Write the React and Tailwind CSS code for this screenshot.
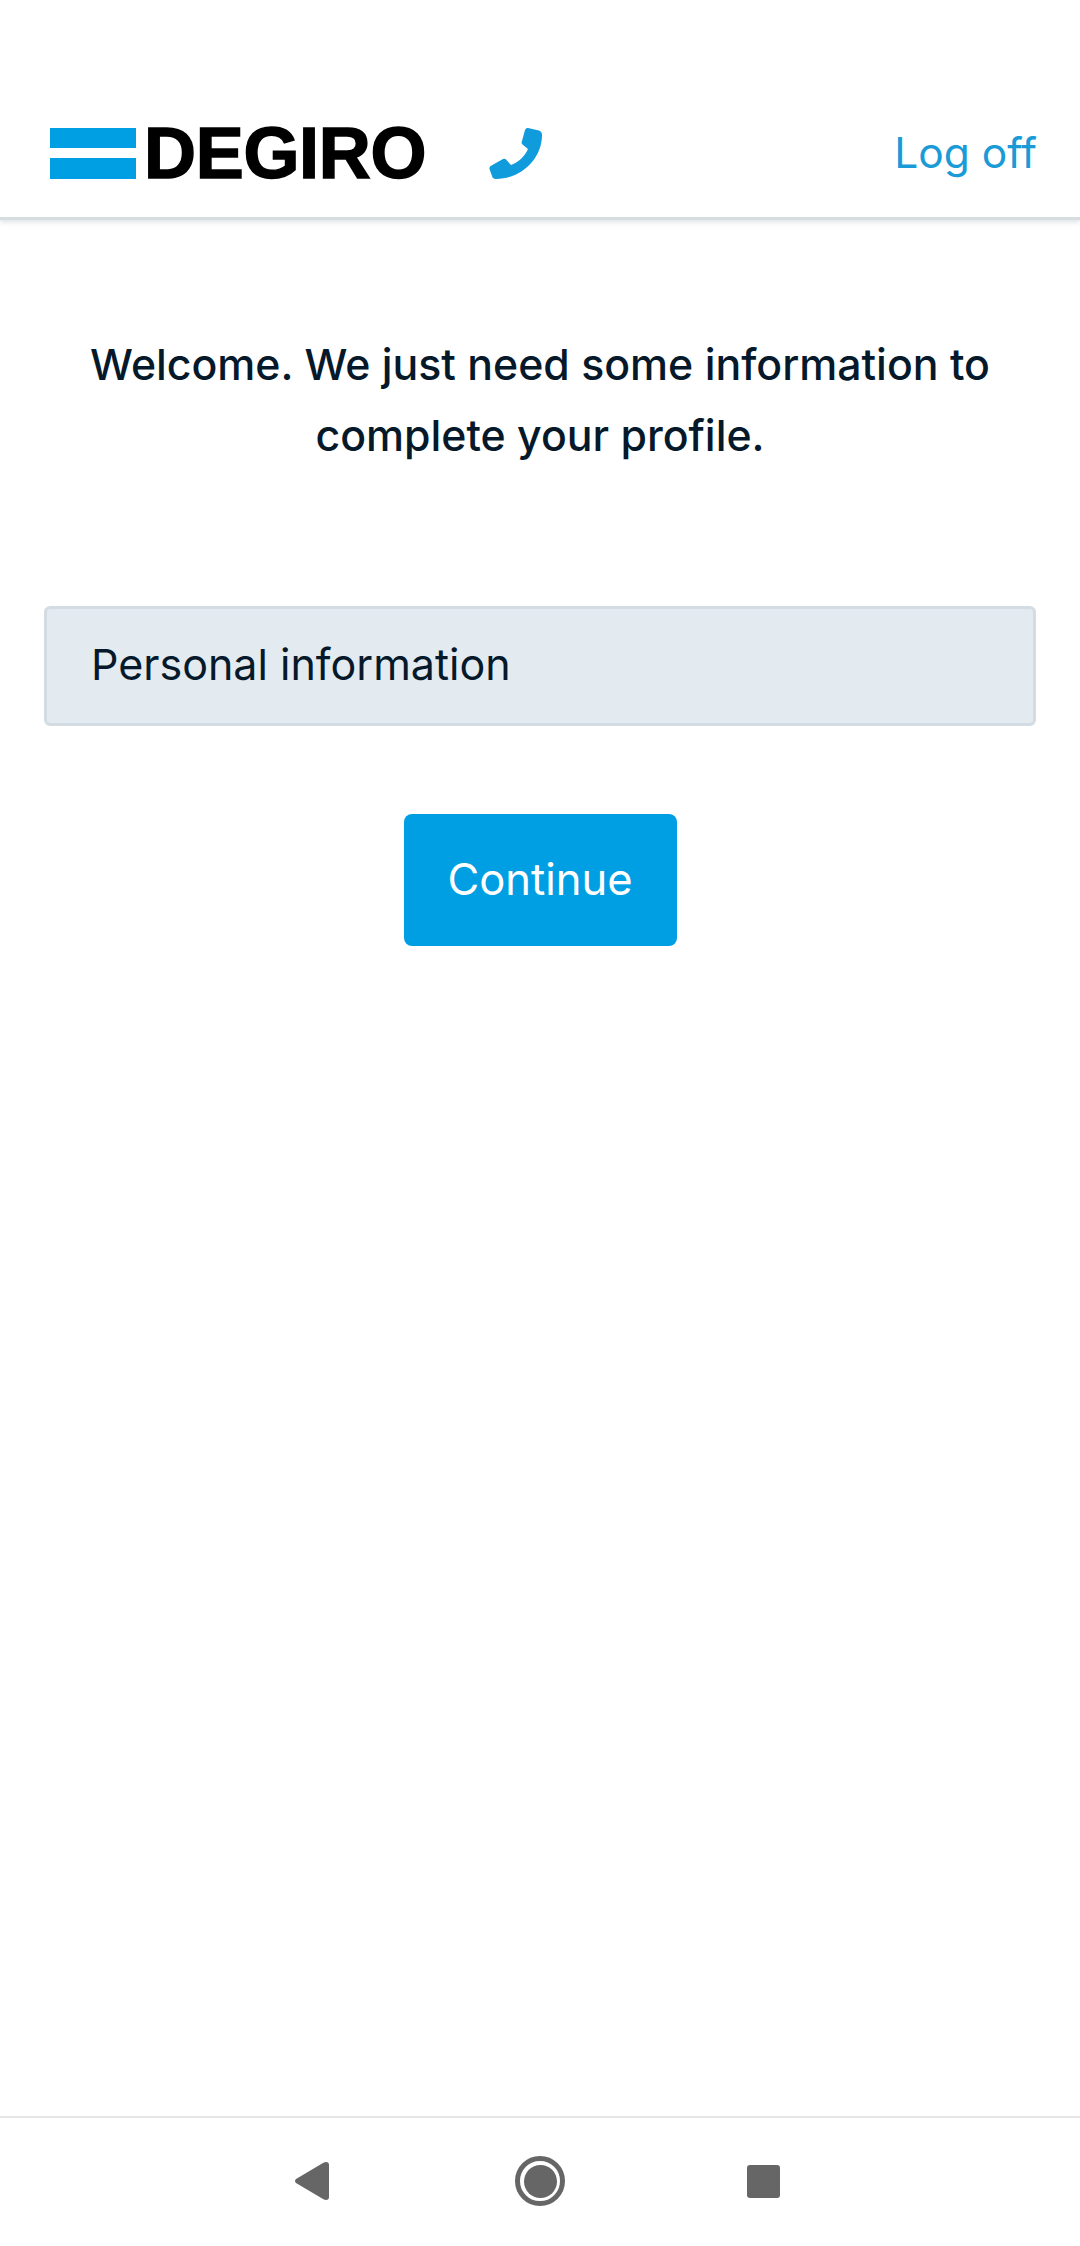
export default function App() {
  return (
    <div className="flex h-[2246px] w-[1080px] flex-col overflow-hidden bg-white font-['Inter',sans-serif] text-[#06192a]">
      <header className="flex h-[220px] shrink-0 items-end justify-between border-b-[3px] border-[#d5dde1] pb-[38px] pl-[50px] pr-[43px] shadow-[0_3px_4px_rgba(150,165,175,0.25)]">
        <div className="flex items-center">
          <div className="flex w-[86px] flex-col gap-[10px]">
            <div className="h-[20px] bg-[#009fe3]" />
            <div className="h-[21px] bg-[#009fe3]" />
          </div>
          <span className="ml-[8px] font-['Liberation_Sans',sans-serif] text-[72px] leading-[52px] font-bold tracking-[-0.3px] text-black [-webkit-text-stroke:1.5px_black]">DEGIRO</span>
          <svg className="ml-[63px] h-[52px] w-[53px]" viewBox="0 0 53 52" fill="#0f9bdc">
            <path d="M39 1 L50 3.5 Q53 4.5 53 8 C53 32 32 52 7 52 Q3.5 52 3 49 L0.5 42 Q0 39.5 2.5 38.5 L14 32 Q16 31 17.5 33 L22 38 C30 35 36 29 39 22 L33.5 17.5 Q32 16 33 14 L36 3 Q37 0.5 39 1 Z" />
          </svg>
        </div>
        <span className="text-[42.5px] leading-[52px] text-[#1a9ad6]">Log off</span>
      </header>
      <main className="flex grow flex-col items-center px-[44px]">
        <h1 className="mt-[109px] text-center text-[42.8px] leading-[71px] font-medium">
          Welcome. We just need some information to<br />complete your profile.
        </h1>
        <div className="mt-[135px] flex h-[120px] w-full items-center rounded-[6px] border-[3px] border-[#d3dce2] bg-[#e3eaf0] px-[44px] pb-[3px] text-[43px]">
          Personal information
        </div>
        <button className="mt-[88px] h-[132px] w-[273px] rounded-[8px] bg-[#009fe3] text-[43.5px] text-white">Continue</button>
      </main>
      <nav className="flex h-[130px] shrink-0 items-center justify-center border-t-2 border-[#e6e6e6] pb-[2px] pr-[6px]">
        <div className="flex items-center">
          <svg className="h-[38px] w-[35px]" viewBox="0 0 35 38" fill="#666666">
            <path d="M32 0 Q35 0 35 3 L35 35 Q35 38 32 38 Q31 38 29 37 L2 21 Q0 19 2 17 L29 1 Q31 0 32 0 Z" />
          </svg>
          <div className="ml-[186px] flex h-[50px] w-[50px] items-center justify-center rounded-full border-[5px] border-[#666666]">
            <div className="h-[33px] w-[33px] rounded-full bg-[#666666]" />
          </div>
          <div className="ml-[182px] h-[33px] w-[33px] rounded-[3px] bg-[#666666]" />
        </div>
      </nav>
    </div>
  );
}
